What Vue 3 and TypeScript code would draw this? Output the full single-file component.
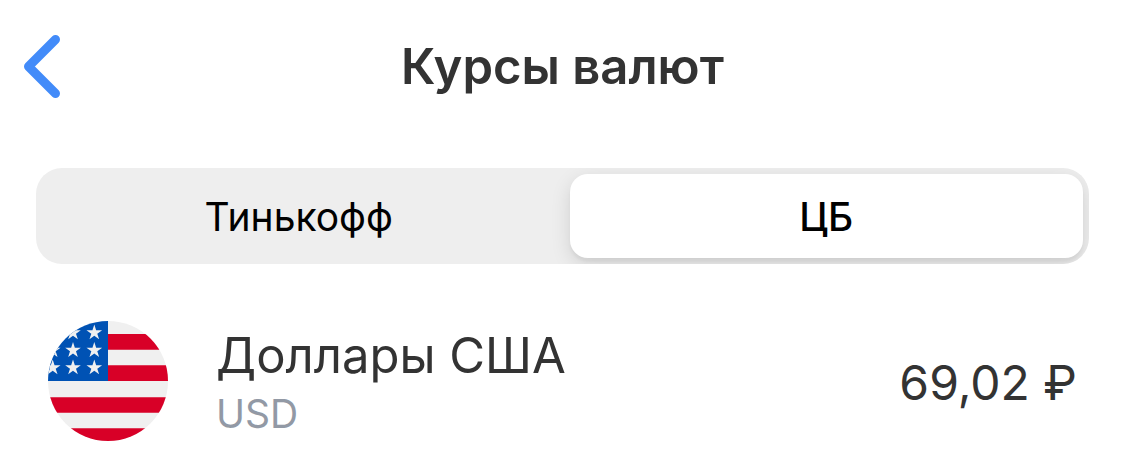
<script setup lang="ts">
import { ref } from 'vue'

interface Star {
  x: number
  y: number
}

const sources: string[] = ['Тинькофф', 'ЦБ']
const selected = ref<string>('ЦБ')

const stars: Star[] = [11.7, 29.3, 46.7].flatMap((y) => [4.7, 25, 46.3].map((x) => ({ x, y })))
</script>

<template>
  <main class="screen">
    <header class="header">
      <button class="back" type="button" aria-label="Назад">
        <svg width="40" height="68" viewBox="0 0 40 68" aria-hidden="true">
          <path d="M35.500 7.500 8.500 34.500 35.500 61.500" />
        </svg>
      </button>
      <h1 class="title">Курсы валют</h1>
    </header>

    <div class="segments">
      <button
        v-for="source in sources"
        :key="source"
        type="button"
        class="segment"
        :class="{ active: source === selected }"
        :aria-pressed="source === selected"
        @click="selected = source"
      >
        {{ source }}
      </button>
    </div>

    <section class="rate">
      <svg class="flag" viewBox="0 0 120 120" aria-hidden="true">
        <defs>
          <clipPath id="flag-circle"><circle cx="60" cy="60" r="60" /></clipPath>
        </defs>
        <g clip-path="url(#flag-circle)">
          <rect width="120" height="120" fill="#f0f0f0" />
          <path
            fill="#d80027"
            d="M60 13H120V28.700H60ZM60 44.300H120V60H60ZM0 76.300H120V91.700H0ZM0 107.300H120V120H0Z"
          />
          <rect width="60" height="60" fill="#0052b4" />
          <path
            v-for="(star, i) in stars"
            :key="i"
            fill="#f0f0f0"
            :transform="`translate(${star.x} ${star.y})`"
            d="M0-8.200 1.850-2.550H7.800L2.990.950 4.820 6.630 0 3.130-4.820 6.630-2.990.950-7.800-2.550H-1.850Z"
          />
        </g>
      </svg>
      <div class="currency">
        <span class="name">Доллары США</span>
        <span class="code">USD</span>
      </div>
      <span class="value">69,02 ₽</span>
    </section>
  </main>
</template>

<style>
body {
  margin: 0;
  background: #fff;
}
</style>

<style scoped>
.screen {
  font-family: Inter, Roboto, sans-serif;
  color: #333;
}

.header {
  display: grid;
  grid-template-columns: 64px 1fr 64px;
  align-items: center;
  height: 132px;
}

.back {
  display: flex;
  padding: 0 0 0 20px;
  border: 0;
  background: none;
  cursor: pointer;
}

.back path {
  fill: none;
  stroke: #428bf9;
  stroke-width: 9;
  stroke-linecap: round;
  stroke-linejoin: round;
}

.title {
  margin: 0;
  padding-top: 2px;
  text-align: center;
  font-size: 49px;
  line-height: 60px;
  font-weight: 600;
}

.segments {
  display: flex;
  gap: 14px;
  margin: 36px 36px 0;
  height: 96px;
  box-sizing: border-box;
  padding: 6px;
  border-radius: 26px;
  background: #eee;
  overflow: hidden;
}

.segment {
  flex: 1;
  padding: 2px 0 0;
  border: 0;
  border-radius: 18px;
  background: none;
  color: #000;
  font-family: inherit;
  font-size: 39px;
  line-height: 46px;
  font-weight: 400;
  cursor: pointer;
}

.segment.active {
  background: #fff;
  font-weight: 500;
  box-shadow: 0 6px 20px rgba(0, 0, 0, 0.12), 0 4px 3px rgba(0, 0, 0, 0.04);
}

.rate {
  display: flex;
  align-items: center;
  padding: 56px 48px 18px;
}

.flag {
  flex: none;
  width: 120px;
  height: 120px;
}

.currency {
  flex: 1;
  display: flex;
  flex-direction: column;
  margin-left: 48px;
  padding-top: 6px;
}

.name {
  font-size: 49px;
  line-height: 60px;
}

.code {
  font-size: 39px;
  line-height: 56px;
  color: #9299a5;
}

.value {
  padding-top: 4px;
  font-size: 48px;
  line-height: 60px;
}
</style>
